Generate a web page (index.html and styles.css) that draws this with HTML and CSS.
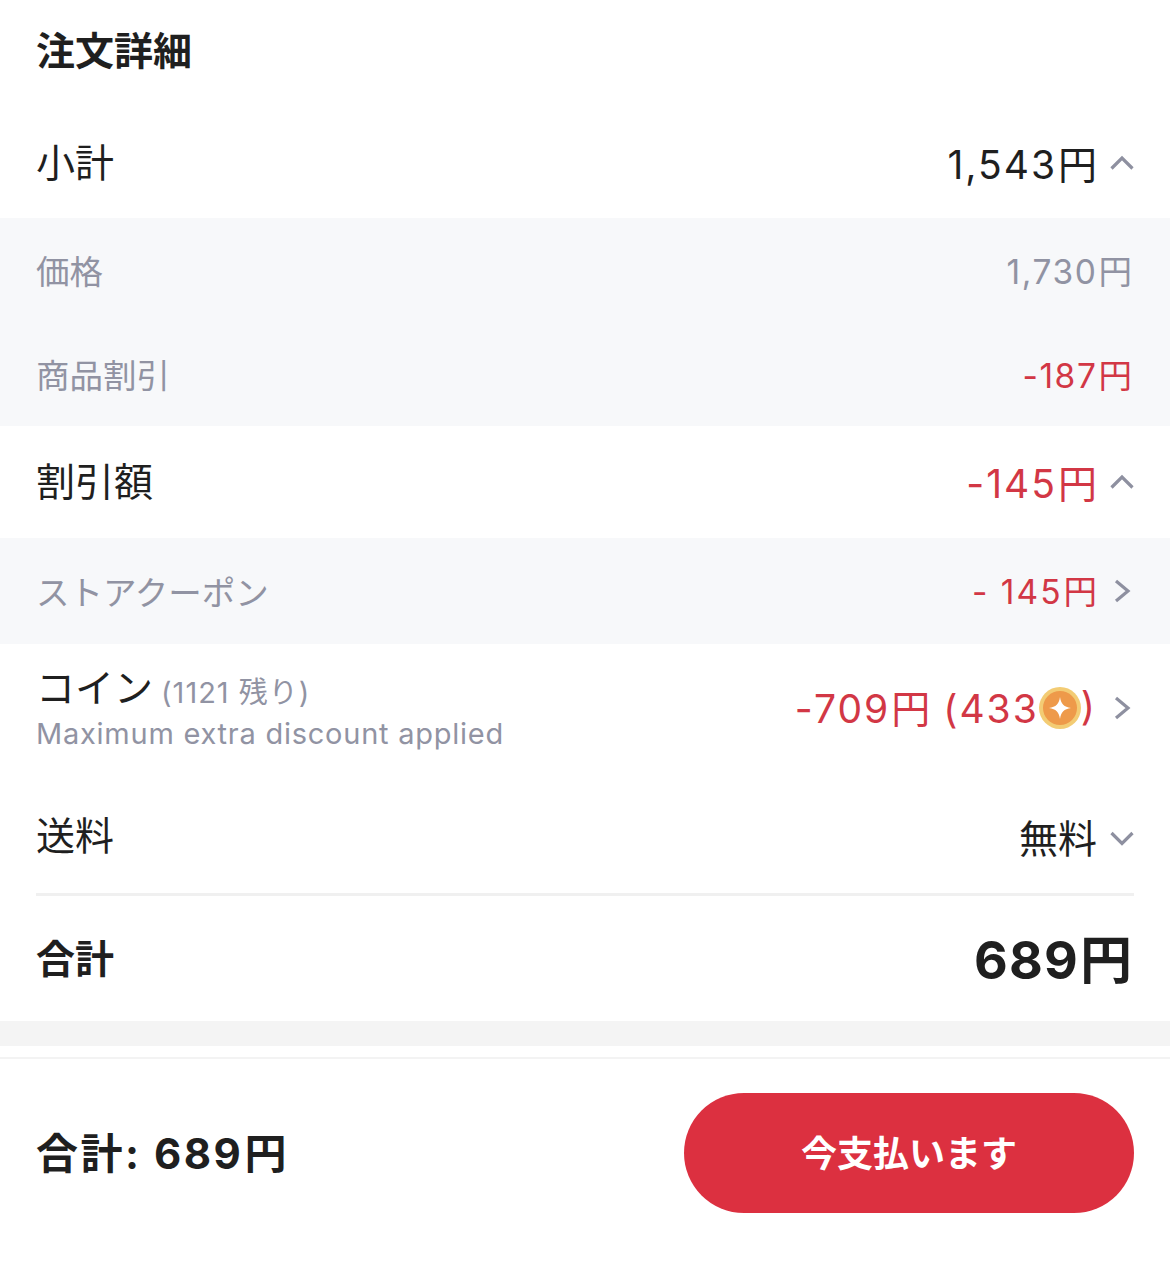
FILE: index.html
```html
<!DOCTYPE html>
<html lang="ja">
<head>
    <meta charset="UTF-8">
    <title>注文詳細</title>
    <link rel="stylesheet" href="styles.css">
</head>
<body>

    <div class="details">
        <h2 class="title">注文詳細</h2>

        <div class="row row-main row-subtotal">
            <span class="label">小計</span>
            <span class="value">
                <span class="amount">1,543<span class="yen">円</span></span>
                <svg class="arrow" viewBox="0 0 24 24"><path d="M1.5 17.5 12 7l10.5 10.5"/></svg>
            </span>
        </div>

        <div class="sub-block">
            <div class="row row-sub">
                <span class="sub-label">価格</span>
                <span class="amount end">1,730<span class="yen">円</span></span>
            </div>
            <div class="row row-sub">
                <span class="sub-label">商品割引</span>
                <span class="amount end red">-187<span class="yen">円</span></span>
            </div>
        </div>

        <div class="row row-main row-discount">
            <span class="label">割引額</span>
            <span class="value red">
                <span class="amount">-145<span class="yen">円</span></span>
                <svg class="arrow" viewBox="0 0 24 24"><path d="M1.5 17.5 12 7l10.5 10.5"/></svg>
            </span>
        </div>

        <div class="sub-block">
            <div class="row row-sub row-coupon">
                <span class="sub-label">ストアクーポン</span>
                <span class="value red">
                    <span class="amount">- 145<span class="yen">円</span></span>
                    <svg class="arrow" viewBox="0 0 24 24"><path d="M6 2l12 10L6 22"/></svg>
                </span>
            </div>
        </div>

        <div class="row row-coin">
            <div>
                <div class="label">コイン<span class="coin-left">(1121 残り)</span></div>
                <div class="coin-note">Maximum extra discount applied</div>
            </div>
            <span class="value red">
                <span class="amount">-709<span class="yen">円</span> (433</span>
                <svg class="coin" viewBox="0 0 42 42">
                    <circle cx="21" cy="21" r="21" fill="#f3cc74"/>
                    <circle cx="21" cy="21" r="17" fill="#ee9a4a"/>
                    <path d="M21 10c1 7 4 10 11 11-7 1-10 4-11 11-1-7-4-10-11-11 7-1 10-4 11-11z" fill="#fff"/>
                </svg>
                <span class="amount">)</span>
                <svg class="arrow" viewBox="0 0 24 24"><path d="M6 2l12 10L6 22"/></svg>
            </span>
        </div>

        <div class="row row-main row-shipping">
            <span class="label">送料</span>
            <span class="value">
                <span>無料</span>
                <svg class="arrow" viewBox="0 0 24 24"><path d="M1.5 9 12 19.5 22.5 9"/></svg>
            </span>
        </div>

        <div class="row row-total">
            <span>合計</span>
            <span class="total-price">689<span class="yen">円</span></span>
        </div>
    </div>

    <div class="gap-bar"></div>

    <div class="footer-bar">
        <span class="footer-total">合計: 689<span class="yen">円</span></span>
        <button class="pay-btn">今支払います</button>
    </div>

</body>
</html>
```

FILE: styles.css
```css
body {
    margin: 0;
    background: #fff;
    color: #1f1f1f;
    font-family: "Inter", "Noto Sans CJK JP", sans-serif;
}

.title {
    margin: 0;
    height: 108px;
    padding: 25px 36px 0;
    box-sizing: border-box;
    font-size: 39px;
    line-height: 52px;
    font-weight: 700;
}

.row {
    display: flex;
    justify-content: space-between;
    align-items: center;
    padding: 0 36px;
}

.row-main {
    font-size: 39px;
}

.row-subtotal {
    height: 110px;
}

.row-discount {
    height: 112px;
}

.row-shipping {
    margin: 0 36px;
    padding: 6px 0 0;
    height: 115px;
    border-bottom: 3px solid #f0f0f0;
}

.value {
    display: flex;
    align-items: center;
}

.amount {
    margin-top: -3px;
    letter-spacing: 2px;
}

.amount.end {
    margin-top: -2px;
    margin-right: 2px;
    letter-spacing: 1.6px;
}

.yen {
    margin-left: 1px;
    letter-spacing: 0;
}

.red {
    color: #d23745;
}

.arrow {
    width: 24px;
    height: 24px;
    margin-left: 13px;
    fill: none;
    stroke: #8e90a0;
    stroke-width: 3.2;
}

.sub-block {
    background: #f7f8fa;
}

.row-sub {
    height: 104px;
    font-size: 33.5px;
    color: #9193a3;
}

.sub-label {
    margin-top: -2px;
}

.row-coupon {
    height: 106px;
}

.row-coin {
    height: 128px;
    font-size: 39px;
}

.row-coin .amount {
    margin-top: -5px;
}

.label {
    line-height: 44px;
}

.coin-left {
    margin-left: 8px;
    vertical-align: -1px;
    font-size: 29px;
    letter-spacing: 1px;
    color: #9193a3;
}

.coin-note {
    margin-top: 2px;
    font-size: 29px;
    line-height: 34px;
    letter-spacing: 0.75px;
    color: #9193a3;
}

.coin {
    width: 42px;
    height: 42px;
}

.row-total {
    height: 125px;
    padding-bottom: 5px;
    box-sizing: border-box;
    font-size: 39px;
    font-weight: 700;
}

.total-price {
    margin-right: 2px;
    font-size: 52px;
    letter-spacing: 1.2px;
}

.gap-bar {
    height: 25px;
    background: #f4f4f4;
    margin-bottom: 11px;
}

.footer-bar {
    display: flex;
    justify-content: space-between;
    align-items: center;
    padding: 34px 36px 0;
    border-top: 2px solid #f3f3f3;
}

.footer-total {
    margin-top: -5px;
    font-size: 42px;
    font-weight: 700;
    letter-spacing: 2.5px;
}

.pay-btn {
    width: 450px;
    height: 120px;
    padding: 0 0 4px;
    border: none;
    border-radius: 60px;
    background: #dc3040;
    color: #fff;
    font-family: inherit;
    font-size: 36px;
    font-weight: 700;
}
```
